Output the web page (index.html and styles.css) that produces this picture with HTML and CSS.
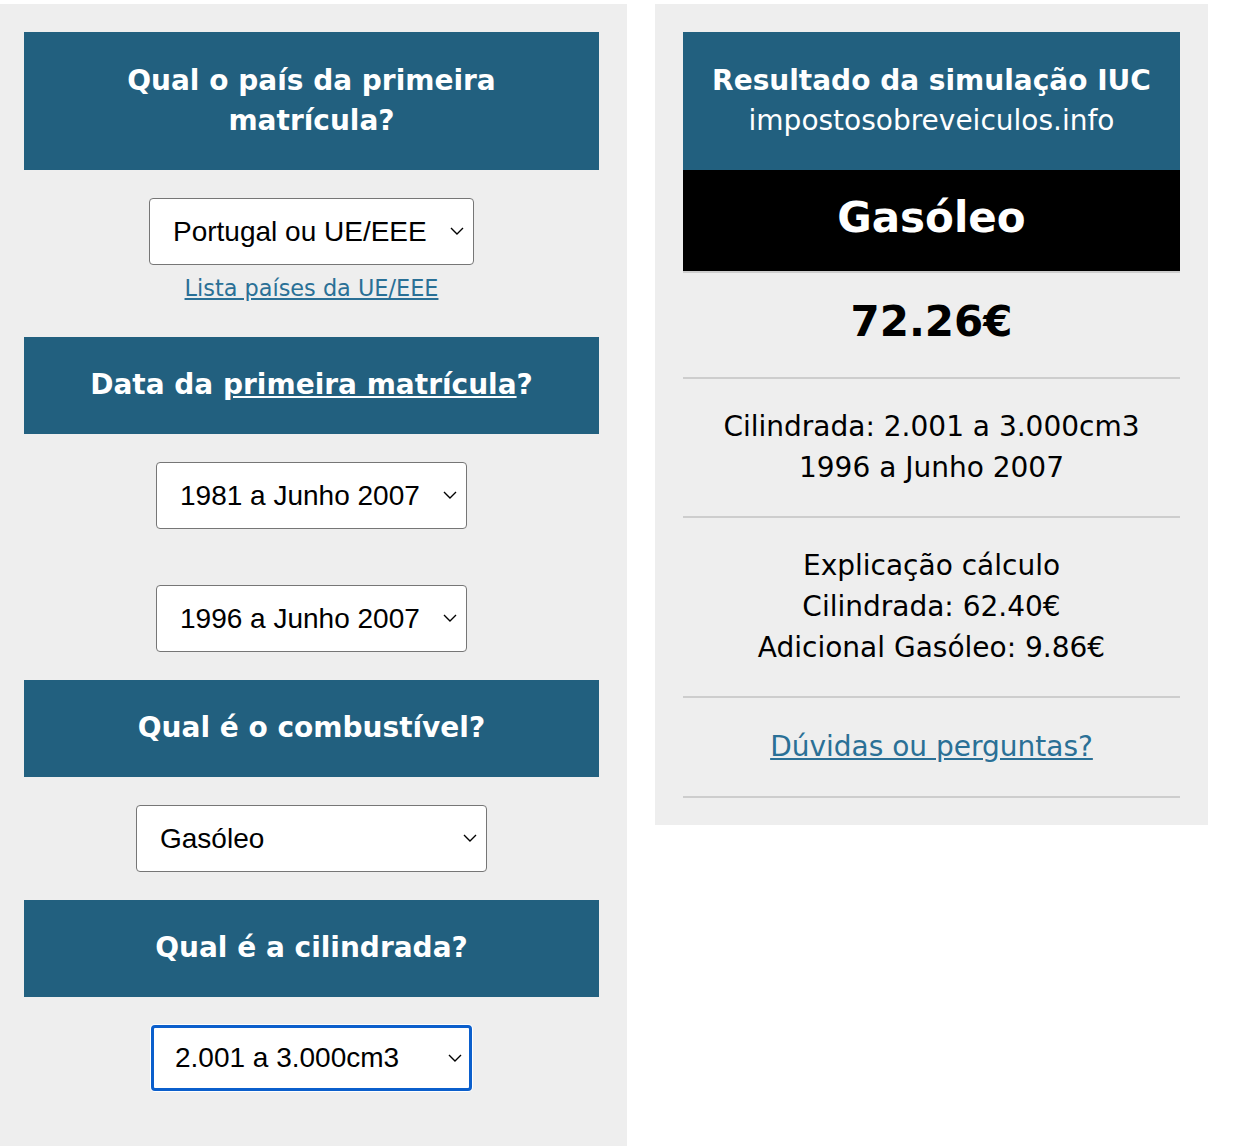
FILE: index.html
```html
<!DOCTYPE html>
<html lang="pt">

<head>
    <meta charset="UTF-8">
    <title>Simulador IUC</title>
    <link rel="stylesheet" href="styles.css">
</head>

<body>

    <div class="page">
        <form class="form-panel">
            <h2 class="question">Qual o país da primeira matrícula?</h2>
            <div class="field">
                <span class="select-wrap">
                    <select name="pais">
                        <option>Portugal ou UE/EEE</option>
                    </select>
                    <svg class="chevron" width="14" height="8" viewBox="0 0 14 8"><path d="M1 1l6 6 6-6" /></svg>
                </span>
                <a class="small-link" href="#">Lista países da UE/EEE</a>
            </div>

            <h2 class="question">Data da <a href="#">primeira matrícula</a>?</h2>
            <div class="field">
                <span class="select-wrap">
                    <select name="periodo">
                        <option>1981 a Junho 2007</option>
                    </select>
                    <svg class="chevron" width="14" height="8" viewBox="0 0 14 8"><path d="M1 1l6 6 6-6" /></svg>
                </span>
            </div>
            <div class="field">
                <span class="select-wrap">
                    <select name="ano">
                        <option>1996 a Junho 2007</option>
                    </select>
                    <svg class="chevron" width="14" height="8" viewBox="0 0 14 8"><path d="M1 1l6 6 6-6" /></svg>
                </span>
            </div>

            <h2 class="question">Qual é o combustível?</h2>
            <div class="field">
                <span class="select-wrap">
                    <select name="combustivel" class="wide">
                        <option>Gasóleo</option>
                    </select>
                    <svg class="chevron" width="14" height="8" viewBox="0 0 14 8"><path d="M1 1l6 6 6-6" /></svg>
                </span>
            </div>

            <h2 class="question">Qual é a cilindrada?</h2>
            <div class="field">
                <span class="select-wrap">
                    <select name="cilindrada" class="cc focused">
                        <option>2.001 a 3.000cm3</option>
                    </select>
                    <svg class="chevron" width="14" height="8" viewBox="0 0 14 8"><path d="M1 1l6 6 6-6" /></svg>
                </span>
            </div>
        </form>

        <div class="result-panel">
            <div class="result-title">
                <strong>Resultado da simulação IUC</strong><br>
                impostosobreveiculos.info
            </div>
            <div class="row fuel">Gasóleo</div>
            <div class="row price">72.26€</div>
            <div class="row">
                Cilindrada: 2.001 a 3.000cm3<br>
                1996 a Junho 2007
            </div>
            <div class="row">
                Explicação cálculo<br>
                Cilindrada: 62.40€<br>
                Adicional Gasóleo: 9.86€
            </div>
            <div class="row link-row">
                <a href="#">Dúvidas ou perguntas?</a>
            </div>
        </div>
    </div>

</body>

</html>
```

FILE: styles.css
```css
body {
    margin: 0;
    font-family: "DejaVu Sans", Verdana, sans-serif;
    background-color: #fff;
}

.page {
    display: flex;
    align-items: flex-start;
    gap: 28px;
    padding-top: 4px;
}

.form-panel {
    width: 575px;
    background-color: #eee;
    padding: 28px 28px 60px 24px;
}

.question {
    margin: 0;
    background-color: #22607f;
    /* azul */
    color: #fff;
    font-size: 28px;
    line-height: 40.5px;
    font-weight: bold;
    text-align: center;
    padding: 28.5px 40px 28px;
}

.question a {
    color: #fff;
}

.field {
    padding: 28px 0;
    text-align: center;
}

.select-wrap {
    position: relative;
    display: inline-block;
    vertical-align: top;
}

select {
    appearance: none;
    -webkit-appearance: none;
    height: 67px;
    padding: 0 46px 0 23px;
    font-family: "Liberation Sans", Arial, sans-serif;
    font-size: 28px;
    color: #000;
    background-color: #fff;
    border: 1px solid #767676;
    border-radius: 4px;
}

select.wide {
    width: 351px;
}

select.cc {
    width: 321px;
}

select.focused {
    height: 66px;
    border: 3px solid #0b5fcc;
    padding-left: 21px;
    box-shadow: 0 0 0 1px #fff;
    outline: none;
}

.chevron {
    position: absolute;
    right: 10px;
    top: 29.5px;
    pointer-events: none;
}

.chevron path {
    fill: none;
    stroke: #000;
    stroke-width: 1.4;
}

.small-link {
    display: block;
    margin-top: 3px;
    font-size: 22.4px;
    line-height: 41px;
    color: #2a7096;
}

.result-panel {
    width: 497px;
    background-color: #eee;
    padding: 28px 28px 27px;
}

.result-title {
    background-color: #22607f;
    color: #fff;
    font-size: 28px;
    line-height: 40.5px;
    text-align: center;
    padding: 28.5px 0 28px;
}

.row {
    text-align: center;
    font-size: 28px;
    line-height: 41px;
    color: #000;
    padding: 27px 0 28px;
    border-bottom: 2px solid #cdcdcd;
}

.fuel {
    background-color: #000;
    color: #fff;
    font-size: 42px;
    font-weight: bold;
    line-height: 50px;
    padding: 23px 0 28px;
}

.price {
    font-size: 42px;
    font-weight: bold;
    line-height: 50px;
    padding: 24px 0 30px;
}

.link-row {
    padding: 28px 0 29px;
}

.link-row a {
    color: #2a7096;
}
```
